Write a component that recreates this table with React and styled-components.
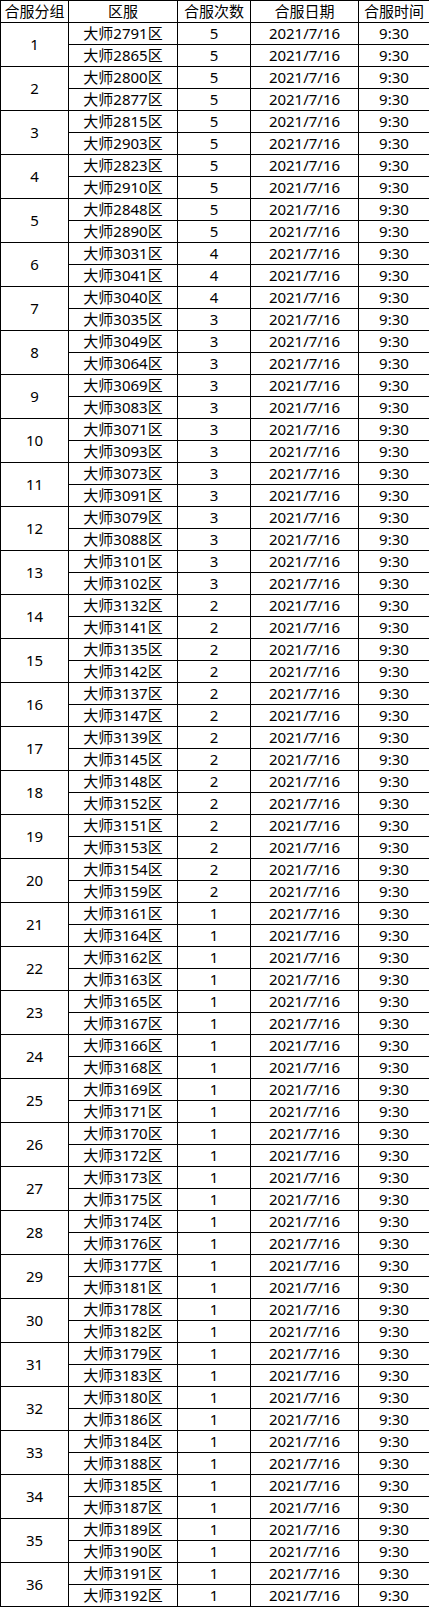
import React from "react";
import styled, { createGlobalStyle } from "styled-components";

const GlobalStyle = createGlobalStyle`
  html, body {
    margin: 0;
    padding: 0;
    background: #fff;
  }
`;

const Table = styled.table`
  width: 429px;
  border-collapse: collapse;
  table-layout: fixed;
  font-family: "Noto Sans", "Noto Sans CJK SC", sans-serif;
  font-size: 15px;
  color: #000;
`;

const Cell = styled.td`
  height: 21px;
  padding: 0;
  border: 1px solid #000;
  text-align: center;
  vertical-align: middle;
  line-height: 21px;
  white-space: nowrap;
  overflow: hidden;
`;

const HeadCell = styled(Cell).attrs({ as: "th" })`
  font-weight: normal;
`;

// 合服分组 -> [区服, 合服次数] pairs
const groups = [
  [["2791", 5], ["2865", 5]],
  [["2800", 5], ["2877", 5]],
  [["2815", 5], ["2903", 5]],
  [["2823", 5], ["2910", 5]],
  [["2848", 5], ["2890", 5]],
  [["3031", 4], ["3041", 4]],
  [["3040", 4], ["3035", 3]],
  [["3049", 3], ["3064", 3]],
  [["3069", 3], ["3083", 3]],
  [["3071", 3], ["3093", 3]],
  [["3073", 3], ["3091", 3]],
  [["3079", 3], ["3088", 3]],
  [["3101", 3], ["3102", 3]],
  [["3132", 2], ["3141", 2]],
  [["3135", 2], ["3142", 2]],
  [["3137", 2], ["3147", 2]],
  [["3139", 2], ["3145", 2]],
  [["3148", 2], ["3152", 2]],
  [["3151", 2], ["3153", 2]],
  [["3154", 2], ["3159", 2]],
  [["3161", 1], ["3164", 1]],
  [["3162", 1], ["3163", 1]],
  [["3165", 1], ["3167", 1]],
  [["3166", 1], ["3168", 1]],
  [["3169", 1], ["3171", 1]],
  [["3170", 1], ["3172", 1]],
  [["3173", 1], ["3175", 1]],
  [["3174", 1], ["3176", 1]],
  [["3177", 1], ["3181", 1]],
  [["3178", 1], ["3182", 1]],
  [["3179", 1], ["3183", 1]],
  [["3180", 1], ["3186", 1]],
  [["3184", 1], ["3188", 1]],
  [["3185", 1], ["3187", 1]],
  [["3189", 1], ["3190", 1]],
  [["3191", 1], ["3192", 1]],
];

const App = () => {
  return (
    <>
      <GlobalStyle />
      <Table>
        <colgroup>
          <col style={{ width: "68px" }} />
          <col style={{ width: "109px" }} />
          <col style={{ width: "73px" }} />
          <col style={{ width: "108px" }} />
          <col style={{ width: "71px" }} />
        </colgroup>
        <thead>
          <tr>
            <HeadCell>合服分组</HeadCell>
            <HeadCell>区服</HeadCell>
            <HeadCell>合服次数</HeadCell>
            <HeadCell>合服日期</HeadCell>
            <HeadCell>合服时间</HeadCell>
          </tr>
        </thead>
        <tbody>
          {groups.map((rows, g) =>
            rows.map(([server, times], i) => (
              <tr key={`${g}-${i}`}>
                {i === 0 && <Cell rowSpan={rows.length}>{g + 1}</Cell>}
                <Cell>大师{server}区</Cell>
                <Cell>{times}</Cell>
                <Cell>2021/7/16</Cell>
                <Cell>9:30</Cell>
              </tr>
            ))
          )}
        </tbody>
      </Table>
    </>
  );
};

export default App;
